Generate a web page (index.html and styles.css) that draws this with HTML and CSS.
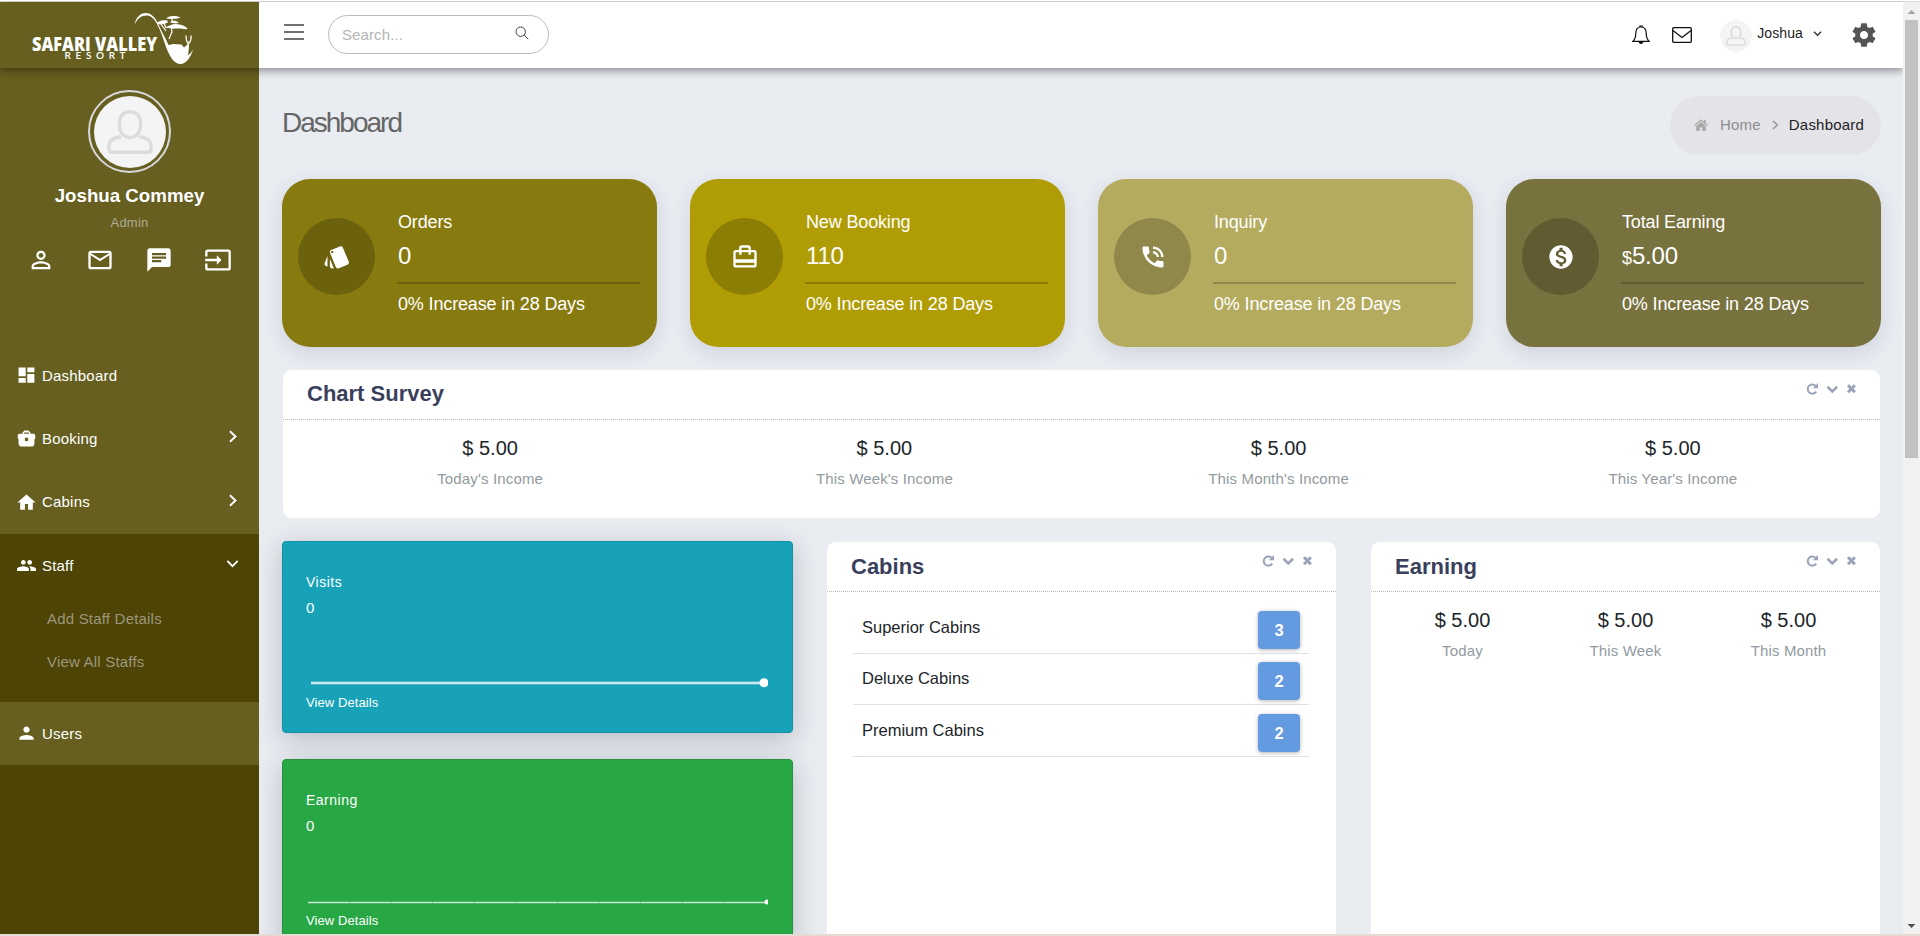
FILE: index.html
```html
<!DOCTYPE html>
<html lang="en">
<head>
<meta charset="utf-8">
<title>Dashboard</title>
<link rel="stylesheet" href="styles.css">
</head>
<body>
<svg width="0" height="0" class="defs">
  <symbol id="avatar" viewBox="0 0 72 72"><circle cx="36" cy="36" r="36" fill="#f4f4f4"/><g fill="none" stroke="#dcdcdc" stroke-width="3.4"><path d="M36 15.700c-6.500 0-10.500 4.500-10.500 10.500v4c0 6 4.500 11.500 10.500 11.500s10.500-5.500 10.500-11.500v-4c0-6-4-10.500-10.500-10.500z"/><path d="M27 40.500c-8 1.500-12 4.500-12 8.500v4.500c0 1.700 1.200 2.800 2.800 2.800h36.400c1.600 0 2.800-1.100 2.800-2.800V49c0-4-4-7-12-8.500"/></g></symbol>
  <symbol id="right" viewBox="0 0 10 10"><path d="M3 1l4.300 4L3 9" fill="none" stroke="currentColor" stroke-width="1.500"/></symbol>
  <symbol id="down" viewBox="0 0 10 10"><path d="M1 3l4 4 4-4" fill="none" stroke="currentColor" stroke-width="1.500"/></symbol>
  <symbol id="tools" viewBox="0 0 52 14"><g fill="none" stroke="#9aa3b8"><path d="M10.200 9.600A4.600 4.600 0 1 1 9.500 3.700" stroke-width="2"/><path d="M21.500 4.800l4.800 4.600 4.800-4.600" stroke-width="2.600"/><path d="M42 3.300l6.900 6.900M48.900 3.300L42 10.200" stroke-width="3"/></g><path d="M12 1v5.200H6.800z" fill="#9aa3b8"/></symbol>
</svg>
<div class="window">
  <div class="app">
    <header class="header">
      <div class="brand">
        <svg width="180" height="66" viewBox="20 2 180 66" fill="#fff">
          <text class="logo-main" x="32" y="50.500" textLength="125" lengthAdjust="spacingAndGlyphs">SAFARI VALLEY</text>
          <text class="logo-sub" x="64.500" y="59" textLength="61" lengthAdjust="spacing">RESORT</text>
          <path d="M134.700 24.500c1-7 5.500-11.500 11-11.500 4.500 0 8.300 3 11.300 8.500 3 6 5.500 12 8.500 17l3 6.500 5-1 8 .5 2.500 3 3.500-3 1-4 .6 5-1 10c2-1.500 3.500-3.500 5-6-2.500 8-7 14.500-12.600 14.500-6 0-10.500-6.500-14.500-17-2.800-8-5-16-9.500-24-2.800-5-6-7.500-10-7.500-5 0-9.200 3-11.800 9z"/>
          <path d="M157 22.500c3-2.200 6-2.400 10-2.200l1 2.200-4 1.500-5 .5z"/>
          <path d="M166 18.600c1-1.500 3-2 6-2.600 4-.2 7 .5 8.500 1.800-3 1-6 1.100-9 1.100z"/>
          <path d="M170 22.500c1-1.800 3-2 6-1.500l3 1.500-3 1z"/>
          <path d="M165.500 27.500c3-1.500 6-3.500 10.500-3.500 5 .2 10 2 11.800 5-4 .6-7-.8-10-.5-4 .2-8 .5-12.300-1z"/>
          <path d="M160.500 23.500l5.500 7.500M164 23l2 5M171 26l1 6-3 7M172 18.500v3.500M186 35.500c0 4 .5 6 2 8M191 35.500c.5 4-.5 6-2 8" fill="none" stroke="#fff" stroke-width="1.200"/>
        </svg>
      </div>
      <div class="topbar">
        <svg width="20" height="16" class="burger"><path d="M0 1h20M0 8h20M0 15h20" stroke="#444" stroke-width="1.500"/></svg>
        <div class="search"><span>Search...</span>
          <svg width="14" height="14" viewBox="0 0 14 14" fill="none" stroke="#444" stroke-width="1"><circle cx="5.700" cy="5.700" r="4.700"/><path d="M9.200 9.200l4 4"/></svg>
        </div>
        <div class="actions">
          <svg class="bell" width="18" height="20" viewBox="0 0 18 20" fill="none" stroke="#111" stroke-width="1.200"><path d="M9 2C5.500 2 3.800 4.500 3.800 8c0 5-1.200 6.800-3 8.400h16.400c-1.800-1.600-3-3.400-3-8.400C14.200 4.500 12.500 2 9 2z"/><path d="M7.200 1.200h3.600M7.300 17.300a1.800 1.500 0 0 0 3.400 0z" fill="#111"/></svg>
          <svg class="mail" width="20" height="16" viewBox="0 0 20 16" fill="none" stroke="#111" stroke-width="1.300"><rect x=".7" y=".7" width="18.600" height="14.600" rx="1"/><path d="M1 3.500l9 7L19 3.500"/></svg>
          <svg class="mini-avatar" width="32" height="32"><use href="#avatar"/></svg>
          <span class="user">Joshua</span>
          <svg class="caret" width="9" height="9"><use href="#down"/></svg>
          <svg class="gear" width="28" height="28" viewBox="0 0 24 24" fill="#555"><path d="M19.430 12.980c.04-.32.07-.64.07-.98s-.03-.66-.07-.98l2.110-1.650c.19-.15.24-.42.12-.64l-2-3.460c-.12-.22-.39-.3-.61-.22l-2.490 1c-.52-.4-1.080-.73-1.690-.98l-.38-2.650C14.460 2.180 14.250 2 14 2h-4c-.25 0-.46.18-.49.42l-.38 2.650c-.61.25-1.170.59-1.690.98l-2.490-1c-.23-.09-.49 0-.61.22l-2 3.460c-.13.22-.07.49.12.64l2.110 1.650c-.04.32-.07.65-.07.98s.03.66.07.98l-2.110 1.650c-.19.15-.24.42-.12.64l2 3.460c.12.22.39.3.61.22l2.490-1c.52.4 1.080.73 1.690.98l.38 2.650c.03.24.24.42.49.42h4c.25 0 .46-.18.49-.42l.38-2.650c.61-.25 1.170-.59 1.690-.98l2.490 1c.23.09.49 0 .61-.22l2-3.460c.12-.22.07-.49-.12-.64l-2.110-1.650zM12 15.500c-1.930 0-3.500-1.570-3.500-3.500s1.570-3.500 3.500-3.500 3.500 1.570 3.500 3.500-1.570 3.500-3.500 3.500z"/></svg>
        </div>
      </div>
    </header>
    <div class="body">
      <aside class="sidebar">
        <div class="profile">
          <div class="ring"><svg width="72" height="72"><use href="#avatar"/></svg></div>
          <div class="name">Joshua Commey</div>
          <div class="role">Admin</div>
          <div class="quick">
            <svg viewBox="0 0 24 24"><path d="M12 5.900c1.160 0 2.100.94 2.100 2.100s-.94 2.100-2.100 2.100S9.900 9.160 9.900 8s.94-2.100 2.100-2.100m0 9c2.970 0 6.100 1.460 6.100 2.100v1.100H5.900V17c0-.64 3.130-2.100 6.100-2.100M12 4C9.790 4 8 5.790 8 8s1.790 4 4 4 4-1.790 4-4-1.790-4-4-4zm0 9c-2.670 0-8 1.340-8 4v3h16v-3c0-2.660-5.330-4-8-4z"/></svg>
            <svg viewBox="0 0 24 24"><path d="M20 4H4c-1.100 0-1.990.9-1.990 2L2 18c0 1.100.9 2 2 2h16c1.100 0 2-.9 2-2V6c0-1.100-.9-2-2-2zm0 14H4V8l8 5 8-5v10zm-8-7L4 6h16l-8 5z"/></svg>
            <svg viewBox="0 0 24 24"><path d="M20 2H4c-1.100 0-1.990.9-1.990 2L2 22l4-4h14c1.100 0 2-.9 2-2V4c0-1.100-.9-2-2-2zM6 9h12v2H6V9zm8 5H6v-2h8v2zm4-6H6V6h12v2z"/></svg>
            <svg viewBox="0 0 24 24"><path d="M21 3.010H3c-1.100 0-2 .9-2 2V9h2V4.990h18v14.030H3V15H1v4.010c0 1.100.9 1.980 2 1.980h18c1.100 0 2-.88 2-1.980v-14c0-1.110-.9-2-2-2zM11 16l4-4-4-4v3H1v2h10v3z"/></svg>
          </div>
        </div>
        <nav>
          <div class="item"><svg viewBox="0 0 24 24"><path d="M2 13h9V2H2v11zm0 8h9v-6H2v6zm11 0h9V10h-9v11zm0-19v6h9V2h-9z"/></svg><span>Dashboard</span></div>
          <div class="item"><svg viewBox="0 0 24 24"><path fill-rule="evenodd" d="M7 6V4.500L9.500 2h5L17 4.500V6h4.500L23 7.500V12l-1 1v6.500L20 22H4l-2-2.500V13l-1-1V7.500L2.500 6zM9 6h6V4.500H9zM10 11v4h4v-4z"/></svg><span>Booking</span><svg class="arrow"><use href="#right"/></svg></div>
          <div class="item"><svg viewBox="0 0 24 24"><path d="M10 21v-7h4v7h6v-9h3.500L12 2 .5 12H4v9z"/></svg><span>Cabins</span><svg class="arrow"><use href="#right"/></svg></div>
          <div class="open">
            <div class="item"><svg viewBox="0 0 24 24"><path d="M16 11c1.660 0 2.990-1.340 2.990-3S17.660 5 16 5c-1.660 0-3 1.340-3 3s1.340 3 3 3zm-8 0c1.660 0 2.990-1.340 2.990-3S9.660 5 8 5C6.340 5 5 6.340 5 8s1.340 3 3 3zm0 2c-2.330 0-8 1.170-8 3.500V19h15v-2.500c0-2.330-4.670-3.500-7-3.500zm8 0c-.29 0-.62.02-.97.05 1.160.84 1.970 1.970 1.970 3.450V19h7v-2.500c0-2.330-5.670-3.500-8-3.500z"/></svg><span>Staff</span><svg class="arrow"><use href="#down"/></svg></div>
            <div class="sub">Add Staff Details</div>
            <div class="sub">View All Staffs</div>
          </div>
          <div class="item"><svg viewBox="0 0 24 24"><path d="M12 11c2.210 0 4-1.790 4-4s-1.790-4-4-4-4 1.790-4 4 1.790 4 4 4zm0 3c-2.670 0-9 1.340-9 4v2h18v-2c0-2.660-6.330-4-9-4z"/></svg><span>Users</span></div>
        </nav>
      </aside>
      <main class="main">
        <div class="title-row">
          <h1>Dashboard</h1>
          <div class="crumbs">
            <svg width="14" height="12" viewBox="0 0 14 12" fill="#aaa"><path d="M7 3L2.200 7v5h3.600V8.500h2.400V12h3.600V7zM7 .3L0 6l.8 1L7 2.100 13.200 7l.8-1-2.200-1.800V1H10v1.700z"/></svg>
            <span class="muted">Home</span>
            <svg width="10" height="10" class="sep"><use href="#right"/></svg>
            <span>Dashboard</span>
          </div>
        </div>
        <section class="stats">
          <div class="stat s1"><div class="disc"><svg viewBox="0 0 24 24"><path d="M2.530 19.650l1.340.56v-9.030l-2.430 5.860c-.41 1.020.08 2.190 1.090 2.610zm19.500-3.700L17.070 3.980c-.31-.75-1.040-1.210-1.810-1.230-.26 0-.53.04-.79.15L7.100 5.950c-.75.31-1.210 1.030-1.230 1.800-.01.27.04.54.15.8l4.960 11.970c.31.76 1.050 1.220 1.830 1.230.26 0 .52-.05.77-.15l7.360-3.050c1.020-.42 1.510-1.590 1.090-2.600zM7.880 8.750c-.55 0-1-.45-1-1s.45-1 1-1 1 .45 1 1-.45 1-1 1zm-2 11c0 1.100.9 2 2 2h1.450l-3.450-8.340v6.340z"/></svg></div><div class="info"><div>Orders</div><div class="num">0</div><hr><div>0% Increase in 28 Days</div></div></div>
          <div class="stat s2"><div class="disc"><svg viewBox="0 0 24 24"><path d="M20 6h-3V4c0-1.110-.89-2-2-2H9c-1.110 0-2 .89-2 2v2H4c-1.110 0-2 .89-2 2v11c0 1.110.89 2 2 2h16c1.110 0 2-.89 2-2V8c0-1.110-.89-2-2-2zM9 4h6v2H9V4zm11 15H4v-2h16v2zm0-5H4V8h3v2h2V8h6v2h2V8h3v6z"/></svg></div><div class="info"><div>New Booking</div><div class="num">110</div><hr><div>0% Increase in 28 Days</div></div></div>
          <div class="stat s3"><div class="disc"><svg viewBox="0 0 24 24"><path d="M20 15.500c-1.250 0-2.450-.2-3.570-.57-.35-.11-.74-.03-1.020.24l-2.200 2.200c-2.830-1.440-5.150-3.750-6.590-6.590l2.200-2.210c.28-.26.36-.65.25-1C8.700 6.450 8.500 5.250 8.500 4c0-.55-.45-1-1-1H4c-.55 0-1 .45-1 1 0 9.390 7.610 17 17 17 .55 0 1-.45 1-1v-3.500c0-.55-.45-1-1-1zM19 12h2c0-4.970-4.030-9-9-9v2c3.870 0 7 3.130 7 7zm-4 0h2c0-2.760-2.240-5-5-5v2c1.660 0 3 1.340 3 3z"/></svg></div><div class="info"><div>Inquiry</div><div class="num">0</div><hr><div>0% Increase in 28 Days</div></div></div>
          <div class="stat s4"><div class="disc"><svg viewBox="0 0 24 24"><path d="M12 2C6.480 2 2 6.480 2 12s4.480 10 10 10 10-4.480 10-10S17.520 2 12 2zm1.410 16.090V20h-2.670v-1.930c-1.710-.36-3.160-1.460-3.270-3.400h1.960c.1 1.050.82 1.870 2.650 1.870 1.960 0 2.400-.98 2.400-1.590 0-.83-.44-1.610-2.670-2.140-2.480-.6-4.180-1.620-4.180-3.670 0-1.720 1.390-2.840 3.110-3.210V4h2.670v1.950c1.860.45 2.790 1.860 2.850 3.390H14.300c-.05-1.110-.64-1.870-2.220-1.870-1.500 0-2.400.68-2.400 1.640 0 .84.65 1.390 2.670 1.910s4.180 1.390 4.180 3.910c-.01 1.830-1.380 2.830-3.120 3.160z"/></svg></div><div class="info"><div>Total Earning</div><div class="num"><small>$</small>5.00</div><hr><div>0% Increase in 28 Days</div></div></div>
        </section>
        <section class="panel survey">
          <div class="panel-head"><h2>Chart Survey</h2><svg width="52" height="14"><use href="#tools"/></svg></div>
          <div class="figures">
            <div><b>$ 5.00</b><span>Today's Income</span></div>
            <div><b>$ 5.00</b><span>This Week's Income</span></div>
            <div><b>$ 5.00</b><span>This Month's Income</span></div>
            <div><b>$ 5.00</b><span>This Year's Income</span></div>
          </div>
        </section>
        <section class="columns">
          <div class="tiles">
            <div class="tile teal"><div class="label">Visits</div><div class="value">0</div>
              <svg width="462" height="10"><path d="M5 5h455" stroke="#fff" stroke-opacity=".25" stroke-width="4"/><path d="M5 5h455" stroke="#fff" stroke-opacity=".7" stroke-width="2"/><circle cx="458" cy="4.800" r="4.500" fill="#fff"/></svg>
              <div class="link">View Details</div></div>
            <div class="tile green"><div class="label">Earning</div><div class="value">0</div>
              <svg width="462" height="10"><path d="M2 6.500h458" stroke="#fff" stroke-opacity=".75" stroke-width="1.600" stroke-dasharray="41.200 .4"/><circle cx="461" cy="6" r="2.500" fill="#fff"/></svg>
              <div class="link">View Details</div></div>
          </div>
          <div class="panel">
            <div class="panel-head lower"><h2>Cabins</h2><svg width="52" height="14"><use href="#tools"/></svg></div>
            <div class="table">
              <div class="row"><span>Superior Cabins</span><b>3</b></div>
              <div class="row"><span>Deluxe Cabins</span><b>2</b></div>
              <div class="row"><span>Premium Cabins</span><b>2</b></div>
            </div>
          </div>
          <div class="panel">
            <div class="panel-head lower"><h2>Earning</h2><svg width="52" height="14"><use href="#tools"/></svg></div>
            <div class="figures">
              <div><b>$ 5.00</b><span>Today</span></div>
              <div><b>$ 5.00</b><span>This Week</span></div>
              <div><b>$ 5.00</b><span>This Month</span></div>
            </div>
          </div>
        </section>
      </main>
    </div>
  </div>
  <div class="scroll">
    <svg width="17" height="18"><path d="M4.500 12l4-4 4 4z" fill="#a3a3a3"/></svg>
    <div class="thumb"></div>
    <svg width="17" height="17" class="end"><path d="M4.500 7l4 4 4-4z" fill="#505050"/></svg>
  </div>
</div>
</body>
</html>
```

FILE: styles.css
```css
* { box-sizing: border-box; }
body {
  margin: 0;
  font-family: "Liberation Sans", Arial, sans-serif;
  font-size: 15px;
  line-height: 20px;
  color: #212529;
  overflow: hidden;
}
svg { display: block; flex: none; }
.defs { position: absolute; }
.window {
  display: flex;
  height: 936px;
  border-top: 1px solid #fff;
  border-bottom: 2px solid #e6dbd3;
  overflow: hidden;
}
.app {
  flex: 1;
  min-width: 0;
  display: flex;
  flex-direction: column;
  border-top: 1px solid #ddd;
  background: #e9ecf1;
}
.scroll {
  position: relative;
  z-index: 3;
  width: 17px;
  display: flex;
  flex-direction: column;
  background: #f1f1f1;
  border-top: 1px solid #ddd;
}
.thumb { width: 13px; height: 438px; margin-left: 2px; background: #c1c1c1; }
.end { margin-top: auto; }

/* Header */
.header {
  position: relative;
  z-index: 2;
  display: flex;
  height: 66px;
  flex: none;
  box-shadow: 0 3px 8px rgba(0, 0, 0, .38);
}
.brand { width: 259px; background: #665f20; padding-left: 20px; }
.logo-main { font: 900 19.5px "Open Sans", sans-serif; }
.logo-sub { font: 600 10px Lato, sans-serif; }
.topbar { flex: 1; display: flex; align-items: flex-start; background: #fff; padding-left: 25px; }
.burger { margin-top: 22px; }
.search {
  display: flex;
  align-items: center;
  justify-content: space-between;
  width: 221px;
  height: 39px;
  margin: 13px 0 0 24px;
  padding: 0 19px 3px 13px;
  border: 1px solid #bbb;
  border-radius: 20px;
  color: #b5b5b5;
  letter-spacing: .1px;
}
.search span { padding-top: 3px; }
.actions { display: flex; align-items: flex-start; margin-left: auto; padding-right: 25px; }
.bell { margin-top: 23px; }
.mail { margin: 25px 28px 0 22px; }
.mini-avatar { margin-top: 18px; }
.user { font-size: 14px; margin: 21px 10px 0 5px; letter-spacing: .1px; color: #222; }
.caret { margin-top: 27px; color: #333; }
.gear { margin: 19px 0 0 28px; }

.body { flex: 1; display: flex; min-height: 0; }

/* Sidebar */
.sidebar { width: 259px; background: #4d4405; color: #fff; }
.profile {
  height: 276px;
  padding-top: 22px;
  background: #665f20;
  display: flex;
  flex-direction: column;
  align-items: center;
}
.ring {
  width: 83px;
  height: 83px;
  border: 2px solid #d9d7dd;
  border-radius: 50%;
  display: grid;
  place-items: center;
}
.name { margin-top: 12px; font-size: 18.72px; font-weight: bold; line-height: 22px; }
.role { margin-top: 7px; font-size: 13px; line-height: 18px; letter-spacing: .2px; color: #b0ad94; }
.quick { display: flex; width: 206px; justify-content: space-between; margin-top: 14px; }
.quick svg { width: 28px; height: 28px; fill: #fff; }
.item {
  display: flex;
  align-items: center;
  height: 63.3px;
  padding: 0 20px 0 17px;
  background: #665f20;
  letter-spacing: .2px;
}
.item > svg { width: 19px; height: 19px; margin-right: 6px; fill: #fff; }
.item > svg.arrow { width: 13px; height: 13px; margin: -4px 0 0 auto; }
.open { height: 168px; background: #4d4405; }
.open .item { background: none; }
.sub { padding-left: 47px; height: 43px; padding-top: 12px; color: #9c977c; letter-spacing: .2px; }

/* Content */
.main { flex: 1; min-width: 0; padding: 28px 22px 0 23px; }
.title-row { display: flex; justify-content: space-between; height: 83px; }
h1 { margin: 11px 0 0; font-size: 28px; line-height: 32px; font-weight: normal; letter-spacing: -2px; color: #666; }
.crumbs {
  display: flex;
  align-items: center;
  width: 211px;
  height: 59px;
  padding: 0 0 2px 24px;
  border-radius: 30px;
  background: #e4e3e8;
  color: #1d1d1f;
  letter-spacing: .2px;
}
.crumbs .muted { margin-left: 12px; color: #8d8d8f; }
.sep { margin: 0 9px 0 9px; color: #999; }
.stats { display: grid; grid-template-columns: repeat(4, 1fr); gap: 33px; }
.stat {
  height: 168px;
  display: flex;
  padding: 0 17px 0 16px;
  border-radius: 28px;
  box-shadow: 0 6px 20px rgba(60, 60, 90, .14);
  color: #fff;
  font-size: 18px;
  letter-spacing: -.15px;
}
.s1 { background: #877a0f; }
.s2 { background: #b09d06; }
.s3 { background: #b4ab5e; }
.s4 { background: #78723e; }
.disc {
  width: 77px;
  height: 77px;
  margin: 39px 22px 0 0;
  border-radius: 50%;
  background: rgba(0, 0, 0, .2);
  display: grid;
  place-items: center;
}
.disc svg { width: 28px; height: 28px; fill: #fff; }
.info { flex: 1; padding-top: 33px; line-height: 20px; }
.info div { padding-left: 1px; }
.num { height: 30px; margin-top: 9px; font-size: 24px; line-height: 30px; }
.num small { font-size: 18px; line-height: 1; }
hr { margin: 11px 0 10px; border: 0; height: 2px; background: rgba(0, 0, 0, .2); }
.panel { background: #fff; border: 1px solid #eceef1; border-radius: 10px; }
.survey { height: 150px; margin-top: 22px; }
.panel-head {
  display: flex;
  justify-content: space-between;
  height: 50px;
  padding: 0 22px 0 24px;
  border-bottom: 1px dotted #bbb;
}
.panel-head svg { margin-top: 12px; }
h2 { margin: 11px 0 0; font-size: 22px; line-height: 26px; color: #3a3f5c; }
.lower h2 { margin-top: 12px; }
.figures { display: flex; padding: 16px 10px 0; text-align: center; }
.figures div { flex: 1; }
.figures b, .figures span { display: block; }
.figures b { font-size: 20px; line-height: 24px; font-weight: normal; }
.figures span { margin-top: 9px; color: #929aa1; letter-spacing: .15px; }
.columns { display: grid; grid-template-columns: repeat(3, 1fr); gap: 33px; margin-top: 22px; height: 420px; }
.tile {
  height: 192px;
  margin-bottom: 26px;
  padding: 30px 23px 0;
  border: 1px solid;
  border-radius: 4px;
  color: #fff;
  box-shadow: 0 6px 26px rgba(30, 35, 50, .24);
}
.teal { background: #18a2b8; border-color: #168fa4; }
.green { background: #28a745; border-color: #279140; }
.label { font-size: 14px; letter-spacing: .5px; }
.value { margin-top: 6px; }
.tile svg { margin-top: 60px; }
.link { margin-top: 5px; font-size: 13px; letter-spacing: .08px; }
.table { margin: 10px 27px 0 26px; }
.row {
  display: flex;
  justify-content: space-between;
  height: 51.5px;
  padding: 8.500px 9px 0 9px;
  border-bottom: 1px solid #dee2e6;
  font-size: 16.5px;
}
.row span { margin-top: 6px; }
.row b {
  width: 42px;
  height: 38px;
  line-height: 38px;
  border-radius: 4px;
  background: #649be0;
  box-shadow: 0 1px 4px rgba(0, 0, 0, .3);
  color: #fff;
  text-align: center;
}
```
